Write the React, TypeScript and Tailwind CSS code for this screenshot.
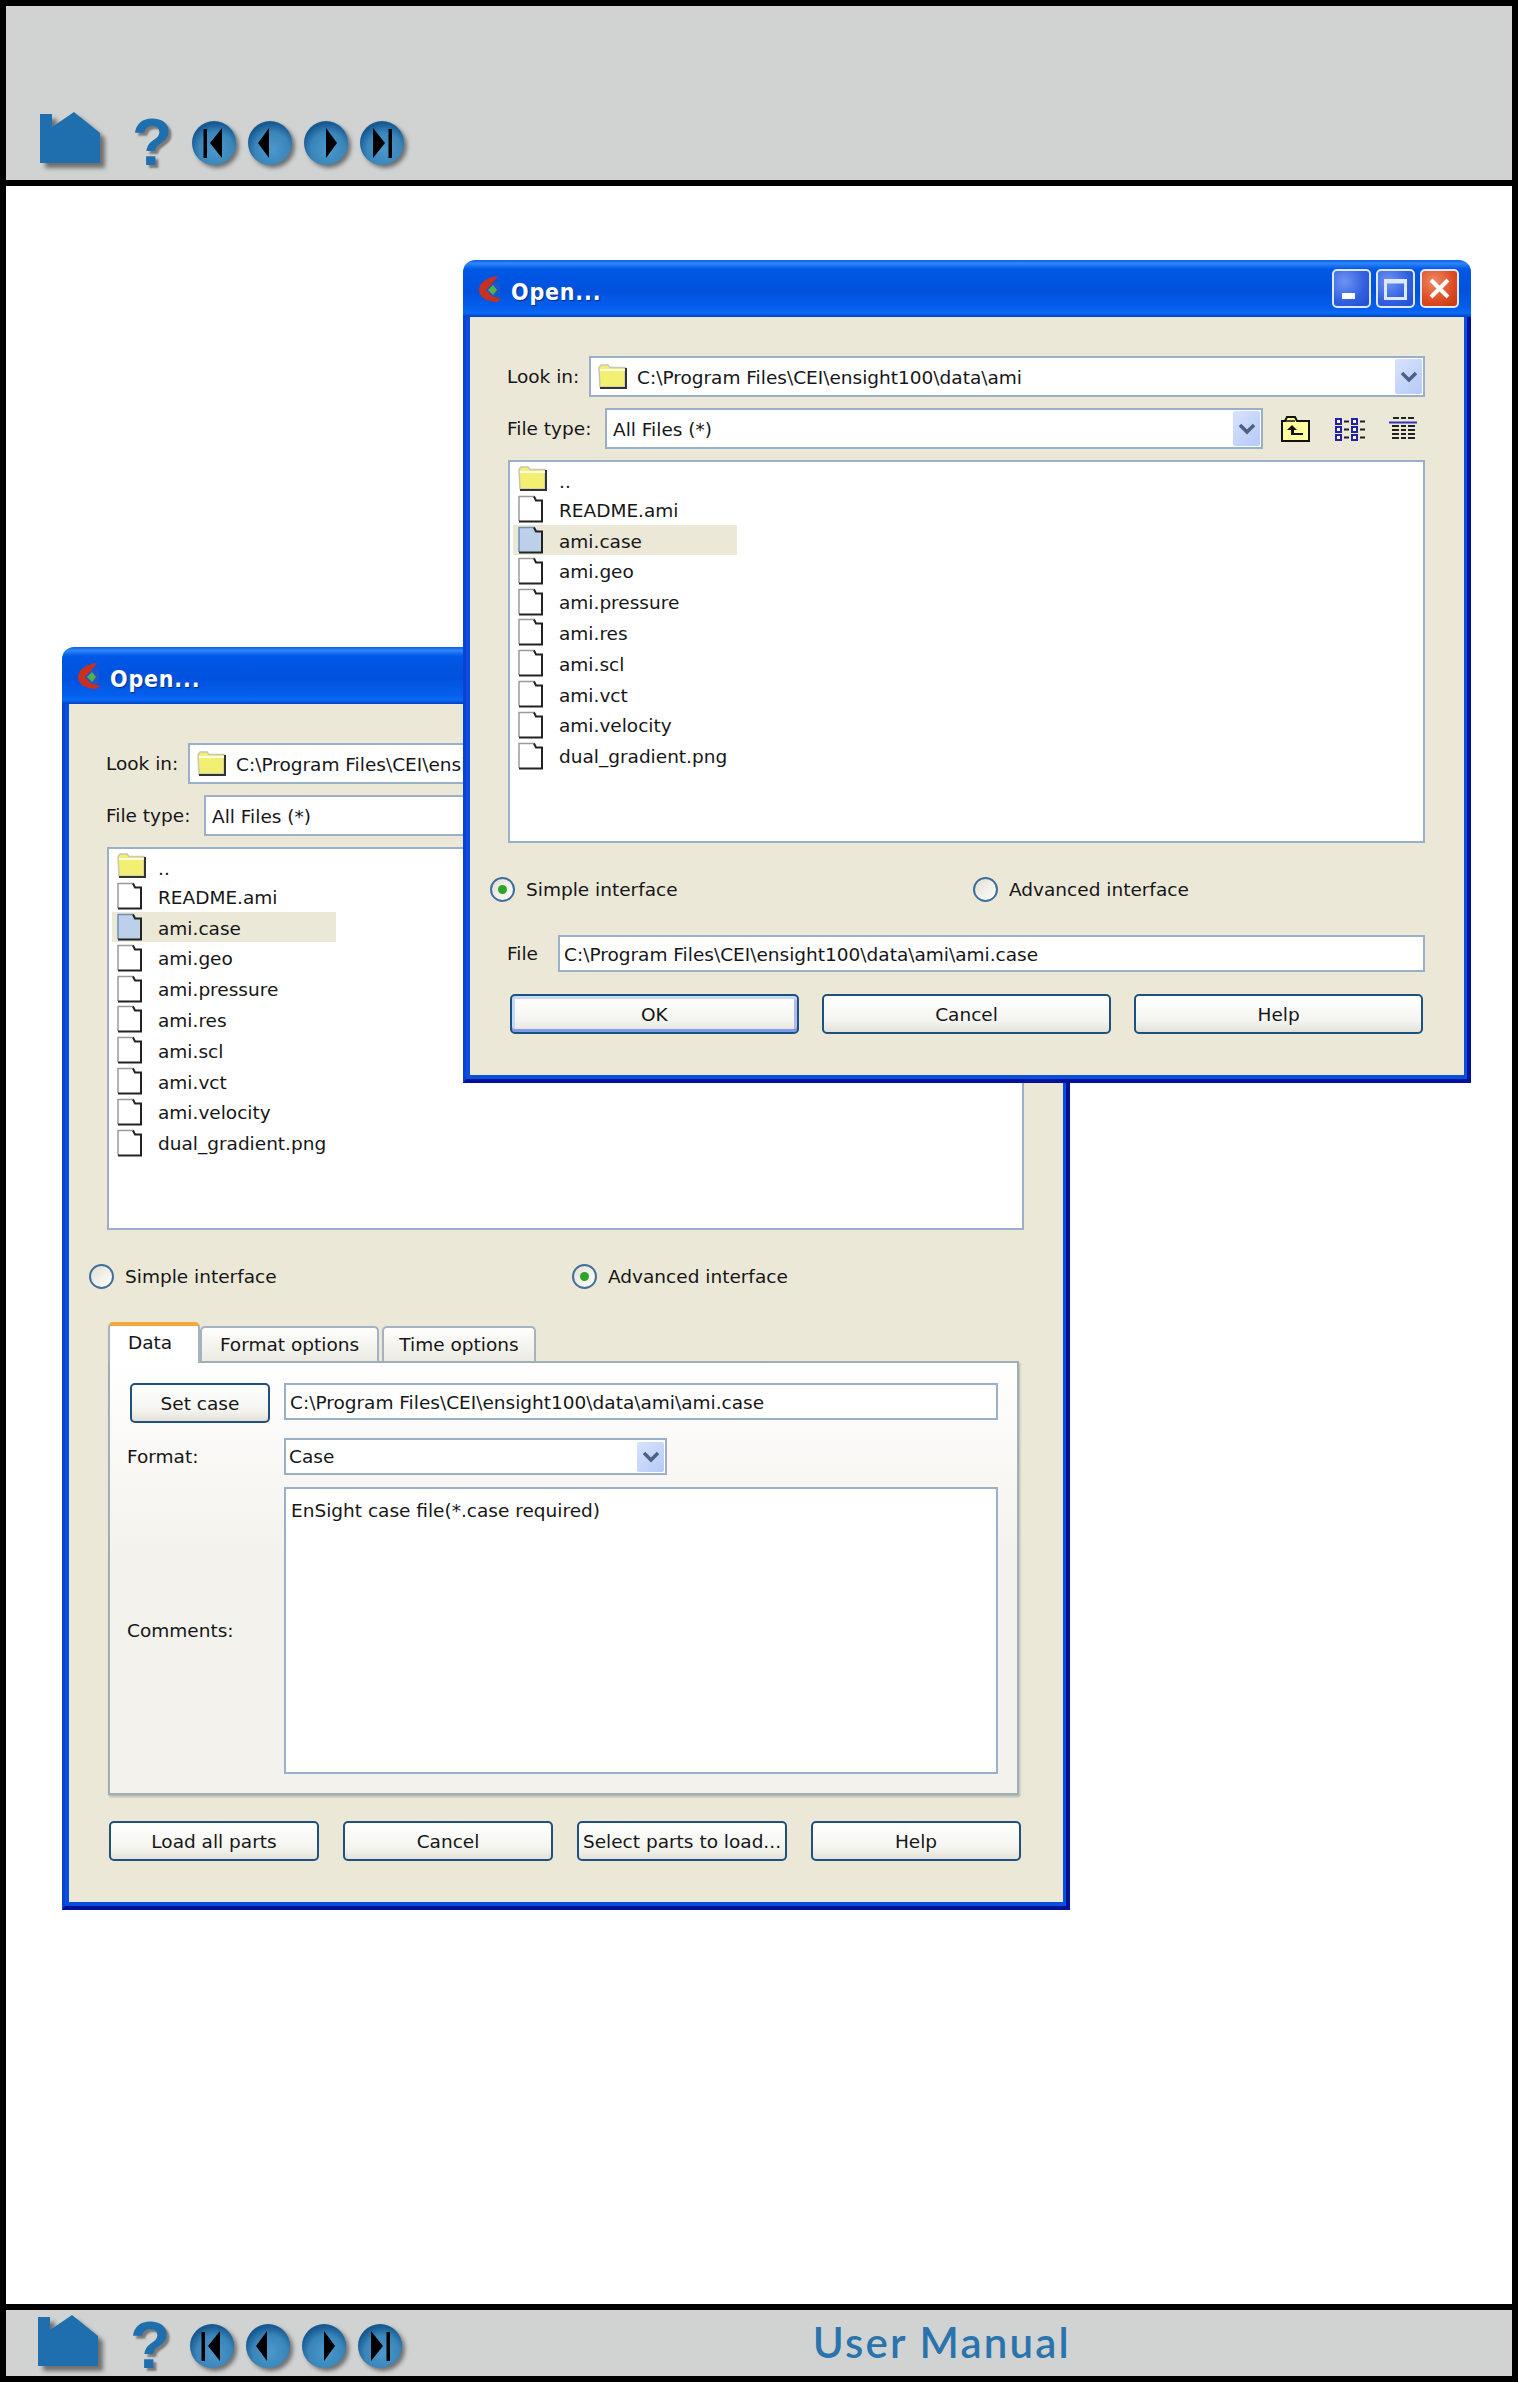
import React, { useId } from "react";

const FILES = [
  "README.ami",
  "ami.case",
  "ami.geo",
  "ami.pressure",
  "ami.res",
  "ami.scl",
  "ami.vct",
  "ami.velocity",
  "dual_gradient.png",
];

const PATH = "C:\\Program Files\\CEI\\ensight100\\data\\ami";

function HomeIcon() {
  return (
    <svg width="66" height="58" viewBox="0 0 66 58" className="shrink-0 overflow-visible drop-shadow-[5px_5px_2px_#6f6f6f]">
      <path d="M0 2H12V15L34 0L60 21V51H0Z" fill="#1f6fae" />
    </svg>
  );
}

function NavButton({ kind }: { kind: "first" | "prev" | "next" | "last" }) {
  const id = useId();
  return (
    <svg width="44" height="44" viewBox="0 0 44 44" className="shrink-0 overflow-visible drop-shadow-[3px_3px_2px_#6f6f6f]">
      <defs>
        <radialGradient id={id} cx="55%" cy="65%" r="60%">
          <stop offset="0%" stopColor="#4c97cb" />
          <stop offset="65%" stopColor="#3a86bb" />
          <stop offset="100%" stopColor="#175a92" />
        </radialGradient>
      </defs>
      <circle cx="22" cy="22" r="22" fill={`url(#${id})`} />
      {kind === "first" && <path d="M11.5 8H15V37H11.5ZM30 7V37L18 22Z" fill="#000" />}
      {kind === "prev" && <path d="M21 7V37L10 22Z" fill="#000" />}
      {kind === "next" && <path d="M22 7V37L33 22Z" fill="#000" />}
      {kind === "last" && <path d="M28.5 8H32V37H28.5ZM13 7V37L25 22Z" fill="#000" />}
    </svg>
  );
}

function NavIcons() {
  return (
    <div className="flex items-start">
      <HomeIcon />
      <span className="ml-[26px] -mt-[3px] w-[40px] font-['Liberation_Sans',sans-serif] text-[66px] font-bold leading-none text-[#1f6fae] [text-shadow:3px_3px_2px_#7a7a7a]">
        ?
      </span>
      <div className="ml-[20px] mt-[9px] flex gap-[12px]">
        <NavButton kind="first" />
        <NavButton kind="prev" />
        <NavButton kind="next" />
        <NavButton kind="last" />
      </div>
    </div>
  );
}

function AppLogo() {
  return (
    <svg width="24" height="28" viewBox="0 0 24 28" className="shrink-0">
      <path d="M20 1C9 2 1 8 1 15C1 22 9 27 19 27L23 24L14 21L8 15L14 9Z" fill="#c9301f" />
      <path d="M14 9L22 6V23L14 21L8 15Z" fill="#1d56c8" />
      <path d="M15 10L19 15L15 20L10 15Z" fill="#55b04a" />
    </svg>
  );
}

function TitleButton({ kind }: { kind: "min" | "max" | "close" }) {
  const bg =
    kind === "close"
      ? "bg-[radial-gradient(circle_at_35%_30%,#ee8a66,#dd4a22_60%,#c23a14)]"
      : "bg-[radial-gradient(circle_at_30%_30%,#6f93f2,#2f5fdf_60%,#1f4fd0)]";
  return (
    <div className={`flex h-[39px] w-[39px] items-center justify-center rounded-[5px] border-2 border-[#dfe8fb] ${bg}`}>
      <svg width="27" height="27" viewBox="0 0 27 27">
        {kind === "min" && <rect x="4" y="18" width="13" height="6" fill="#fff" />}
        {kind === "max" && <path d="M3.5 5.5H23.5V23.5H3.5Z M3.5 7H23.5" fill="none" stroke="#dfe8fb" strokeWidth="3" />}
        {kind === "close" && <path d="M5 5L22 22M22 5L5 22" stroke="#fff" strokeWidth="4" />}
      </svg>
    </div>
  );
}

function Chevron({ small }: { small?: boolean }) {
  return (
    <div
      className={`flex shrink-0 items-center justify-center rounded-[2px] bg-[linear-gradient(135deg,#d7e2fc,#b6caf8)] ${
        small ? "mr-[1px] h-[30px] w-[27px]" : "mr-[1px] h-[35px] w-[27px]"
      }`}
    >
      <svg width="18" height="12" viewBox="0 0 18 12">
        <path d="M2 2L9 9L16 2" fill="none" stroke="#4d6185" strokeWidth="3.5" />
      </svg>
    </div>
  );
}

function Combo({ children, small, className }: { children: React.ReactNode; small?: boolean; className: string }) {
  return (
    <div className={`flex items-center border-2 border-[#9ab0c8] bg-white ${className}`}>
      <div className="flex min-w-0 flex-1 items-center whitespace-nowrap">{children}</div>
      <Chevron small={small} />
    </div>
  );
}

function FolderIcon() {
  return (
    <svg width="30" height="25" viewBox="0 0 30 25" className="shrink-0">
      <path d="M1 5V3.5L3 1H10L12 3.5H27V23H2Z" fill="#f2ef72" stroke="#c8c8b4" strokeWidth="1.5" />
      <path d="M28 4V24H2" fill="none" stroke="#333" strokeWidth="2" />
      <path d="M2 6H27" stroke="#fffde0" strokeWidth="2" />
    </svg>
  );
}

function FileIcon({ selected }: { selected?: boolean }) {
  return (
    <svg width="26" height="28" viewBox="0 0 26 28" className="shrink-0">
      <path d="M1 1.5H17L24 8V26.5H1Z" fill={selected ? "#bdd0ea" : "#fff"} />
      <path d="M1 26V1.5H17" fill="none" stroke={selected ? "#6f8db8" : "#9a9a9a"} strokeWidth="1.5" />
      <path d="M16 1.5L18 5.5H24V26.5H1" fill="none" stroke="#222" strokeWidth="2" />
    </svg>
  );
}

function UpFolderIcon() {
  return (
    <svg width="29" height="26" viewBox="0 0 29 26" className="shrink-0">
      <path d="M1 25V5H4L6 1H14L16 5H28V25Z" fill="#ffff9e" stroke="#111" strokeWidth="2" />
      <path d="M3 5H14" stroke="#111" strokeWidth="1.5" />
      <path d="M11 9L6 14H10V19H22V17H13V14H16Z" fill="#111" />
    </svg>
  );
}

function ListIcon() {
  const rows = [2, 10, 18];
  const cols = [1, 17];
  return (
    <svg width="31" height="24" viewBox="0 0 31 24" className="shrink-0">
      {rows.map((y) =>
        cols.map((x) => (
          <g key={`${x}-${y}`}>
            <rect x={x} y={y} width="5" height="5" fill="#fff" stroke="#2222a8" strokeWidth="2" />
            <rect x={x + 8} y={y + 1.5} width="5" height="2" fill="#222" />
          </g>
        ))
      )}
    </svg>
  );
}

function DetailIcon() {
  return (
    <svg width="28" height="25" viewBox="0 0 28 25" className="shrink-0">
      <path d="M4 2H10M12 2H17M19 2H25" stroke="#222" strokeWidth="2" />
      <path d="M0 6.5H28" stroke="#3535b5" strokeWidth="2" />
      <path
        d="M3 10H10M12 10H17M19 10H26M3 14H10M12 14H17M19 14H26M3 18H10M12 18H17M19 18H26M3 22H10M12 22H17M19 22H26"
        stroke="#222"
        strokeWidth="2"
      />
    </svg>
  );
}

function FileList() {
  return (
    <div className="mr-[39px] ml-[38px] h-[383px] border-2 border-[#9ab0c8] bg-white pt-[1px]">
      <div className="ml-[3px] flex h-[30.8px] w-[224px] items-center pl-[5px]">
        <div className="w-[41px] shrink-0">
          <FolderIcon />
        </div>
        <span className="mt-[6px]">..</span>
      </div>
      {FILES.map((name) => (
        <div
          key={name}
          className={`ml-[3px] flex h-[30.8px] w-[224px] items-center pl-[5px] ${name === "ami.case" ? "bg-[#ebe8d8]" : ""}`}
        >
          <div className="w-[41px] shrink-0">
            <FileIcon selected={name === "ami.case"} />
          </div>
          <span className="mt-[3px] whitespace-nowrap">{name}</span>
        </div>
      ))}
    </div>
  );
}

function Radio({ label, checked, className }: { label: string; checked?: boolean; className?: string }) {
  return (
    <div className={`flex h-[25px] items-center gap-[11px] ${className ?? ""}`}>
      <div className="flex h-[25px] w-[25px] items-center justify-center rounded-full border-2 border-[#3f6f9b] bg-[linear-gradient(135deg,#e2dfd2,#ffffff)]">
        {checked && <div className="h-[9px] w-[9px] rounded-full bg-[#2aa52a]" />}
      </div>
      <span>{label}</span>
    </div>
  );
}

function XpButton({ label, isDefault, className }: { label: string; isDefault?: boolean; className?: string }) {
  return (
    <div
      className={`flex h-[40px] items-center justify-center whitespace-nowrap rounded-[5px] border-2 border-[#1f5180] bg-[linear-gradient(180deg,#ffffff,#f4f4ef_70%,#e3e1d8)] pt-[2px] ${
        isDefault ? "shadow-[inset_0_3px_0_#c5d9f8,inset_0_-3px_0_#7f9bec,inset_3px_0_0_#c5d9f8,inset_-3px_0_0_#a9bdf0]" : ""
      } ${className ?? ""}`}
    >
      {label}
    </div>
  );
}

function TextBox({ children, className }: { children: React.ReactNode; className: string }) {
  return <div className={`border-2 border-[#9ab0c8] bg-white ${className}`}>{children}</div>;
}

function Tab({ label, className }: { label: string; className: string }) {
  return (
    <div className={`flex h-[35px] items-center justify-center rounded-t-[5px] border-2 border-b-0 border-[#a4b3bf] bg-[linear-gradient(180deg,#fefefd,#ecebe2)] ${className}`}>
      {label}
    </div>
  );
}

function AdvancedPanel() {
  return (
    <div className="mt-[33px] ml-[39px] w-[911px]">
      <div className="relative z-10 flex h-[39px] items-end">
        <div className="-mb-[2px] h-[41px] w-[92px] rounded-t-[5px] border-x-2 border-[#a4b3bf] border-t-[4px] border-t-[#f2a93b] bg-white pt-[3px] pl-[18px]">
          Data
        </div>
        <Tab label="Format options" className="w-[179px]" />
        <Tab label="Time options" className="ml-[3px] w-[154px]" />
      </div>
      <div className="h-[434px] border-2 border-[#a0aeb8] bg-[linear-gradient(180deg,#ffffff,#f4f2ec_45%)] pt-[20px] pl-[17px] shadow-[1px_2px_2px_#b9b7aa]">
        <div className="grid grid-cols-[157px_714px]">
          <XpButton label="Set case" className="ml-[3px] w-[140px]" />
          <TextBox className="flex h-[37px] items-center pt-[2px] pl-[4px] whitespace-nowrap">{PATH}\ami.case</TextBox>
          <span className="mt-[15px] flex h-[37px] items-center">Format:</span>
          <Combo small className="mt-[15px] h-[37px] w-[383px] pl-[3px]">
            Case
          </Combo>
          <span className="mt-[13px] flex h-[286px] items-center">Comments:</span>
          <TextBox className="mt-[12px] h-[287px] pt-[8px] pl-[5px]">EnSight case file(*.case required)</TextBox>
        </div>
      </div>
      <div className="mt-[26px] -mr-[2px] ml-[1px] flex gap-[24px]">
        <XpButton label="Load all parts" className="flex-1" />
        <XpButton label="Cancel" className="flex-1" />
        <XpButton label="Select parts to load..." className="flex-1" />
        <XpButton label="Help" className="flex-1" />
      </div>
    </div>
  );
}

function SimplePanel() {
  return (
    <>
      <div className="mt-[33px] mr-[39px] ml-[37px] flex h-[37px] items-center">
        <span className="w-[51px] shrink-0">File</span>
        <TextBox className="flex h-[37px] flex-1 items-center pt-[2px] pl-[4px]">{PATH}\ami.case</TextBox>
      </div>
      <div className="mt-[22px] mr-[41px] ml-[40px] flex gap-[23.5px]">
        <XpButton label="OK" isDefault className="flex-1" />
        <XpButton label="Cancel" className="flex-1" />
        <XpButton label="Help" className="flex-1" />
      </div>
    </>
  );
}

function OpenDialog({ advanced, className }: { advanced?: boolean; className: string }) {
  return (
    <div className={`absolute w-[1008px] overflow-hidden rounded-t-[12px] ${className}`}>
      {/* Title bar */}
      <div className="flex h-[57px] items-center bg-[linear-gradient(180deg,#0a5fe8_0%,#2f86f7_6%,#0058e6_16%,#0052dd_55%,#0560ee_86%,#0a6af5_93%,#0041c4_100%)] pr-[12px] pl-[15px]">
        <AppLogo />
        <span className="mt-[7px] ml-[9px] flex-1 text-[23px] font-bold tracking-[0.8px] text-white [text-shadow:1px_1px_1px_#0a2a8a] [font-stretch:condensed]">
          Open...
        </span>
        <div className="flex gap-[5px]">
          <TitleButton kind="min" />
          <TitleButton kind="max" />
          <TitleButton kind="close" />
        </div>
      </div>
      {/* Frame */}
      <div className="border-r-[4px] border-b-[4px] border-l-[3px] border-r-[#00129a] border-b-[#00129a] border-l-[#0a42d8] bg-[#0a4fdc] pr-[3px] pb-[4px] pl-[4px]">
        <div className="flex flex-col bg-[#ebe8d8] pt-[39px] pb-[41px]">
          <div className="mr-[39px] ml-[37px] flex h-[41px] items-center">
            <span className="w-[82px] shrink-0">Look in:</span>
            <Combo className="h-[41px] flex-1 pl-[7px]">
              <FolderIcon />
              <span className="mt-[3px] ml-[9px]">{PATH}</span>
            </Combo>
          </div>
          <div className="mt-[11px] ml-[37px] flex h-[41px] items-center">
            <span className="w-[98px] shrink-0">File type:</span>
            <Combo className="h-[41px] w-[658px] pl-[6px]">
              <span className="mt-[3px]">All Files (*)</span>
            </Combo>
            <div className="ml-[18px]">
              <UpFolderIcon />
            </div>
            <div className="ml-[25px]">
              <ListIcon />
            </div>
            <div className="ml-[23px]">
              <DetailIcon />
            </div>
          </div>
          <div className="mt-[11px]">
            <FileList />
          </div>
          <div className="mt-[34px] ml-[20px] flex">
            <Radio label="Simple interface" checked={!advanced} className="w-[483px]" />
            <Radio label="Advanced interface" checked={advanced} />
          </div>
          {advanced ? <AdvancedPanel /> : <SimplePanel />}
        </div>
      </div>
    </div>
  );
}

export default function App() {
  return (
    <div className="flex h-[2382px] w-[1518px] flex-col bg-black p-[6px] font-['DejaVu_Sans',sans-serif] text-[18.5px] text-[#161616]">
      <header className="h-[174px] shrink-0 bg-[#d1d3d2] pt-[106px] pl-[34px]">
        <NavIcons />
      </header>
      <main className="relative mt-[6px] flex-1 bg-white">
        <OpenDialog advanced className="top-[461px] left-[56px]" />
        <OpenDialog className="top-[74px] left-[457px]" />
      </main>
      <footer className="mt-[6px] flex h-[66px] shrink-0 items-start justify-between bg-[#d1d3d2] pt-[5px] pl-[32px]">
        <NavIcons />
        <span className="mt-[6px] mr-[441px] font-['Lato',sans-serif] text-[42px] leading-none font-semibold tracking-[2.2px] text-[#2a73ad]">
          User Manual
        </span>
      </footer>
    </div>
  );
}
